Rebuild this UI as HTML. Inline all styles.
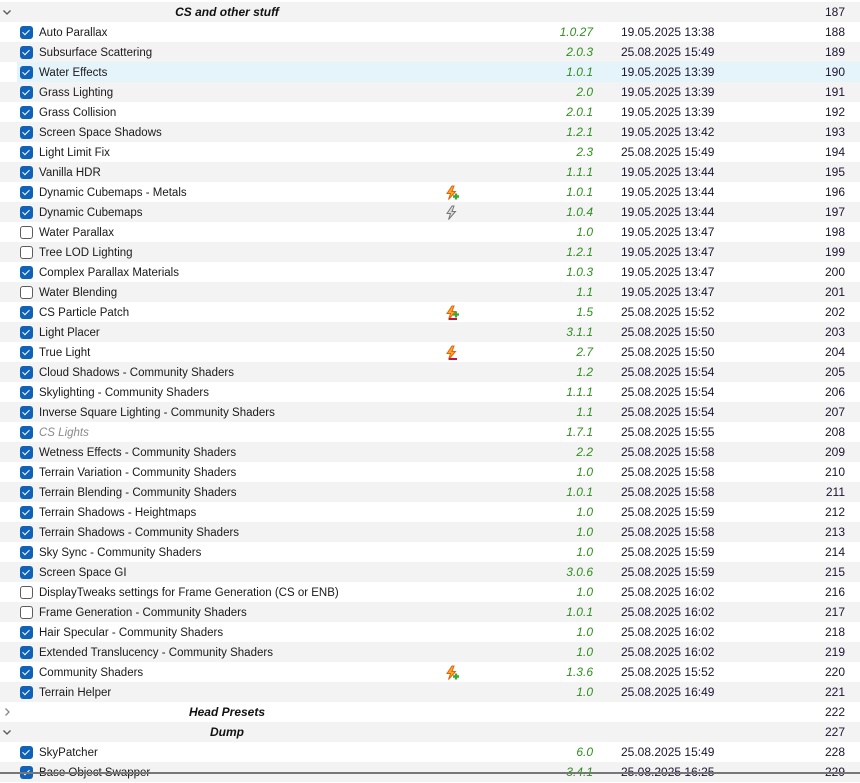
<!DOCTYPE html>
<html><head><meta charset="utf-8"><style>
*{margin:0;padding:0;box-sizing:border-box}
html,body{width:860px;height:775px;overflow:hidden;background:#fff;font-family:"Liberation Sans",sans-serif;font-size:11.5px;color:#1a1a1a}
#w{position:absolute;left:0;top:2px;width:860px}
.r{position:relative;height:20px;line-height:20px;background:#fff;white-space:nowrap}
.g{background:#f3f3f3}
.h{background:linear-gradient(to right,#fff 0,#fff 17px,#e5f3fb 17px)}
.c{position:absolute;left:20px;top:4px;width:13px;height:13px;border-radius:3px;background:#0f62b8}
.c::after{content:"";position:absolute;left:4px;top:2px;width:3px;height:6px;border:solid #fff;border-width:0 1.5px 1.5px 0;transform:rotate(45deg)}
.u{position:absolute;left:20px;top:4px;width:13px;height:13px;border-radius:3px;background:#fff;border:1px solid #5c5c5c}
.n{position:absolute;left:39px;top:1px}
.gi{color:#8a8a8a;font-style:italic}
.v{position:absolute;right:267px;color:#2f8f1f;font-style:italic;font-size:12px}
.d{position:absolute;left:621px;color:#1c1530;font-size:12px}
.p{position:absolute;right:15px;color:#1c1530;font-size:12px}
.s{position:absolute;left:0;width:454px;text-align:center;font-weight:bold;font-style:italic;color:#111;font-size:12px}
.ic{position:absolute;left:444px;top:3px}
.ar{position:absolute;left:2px;top:5px}
#bl{position:absolute;left:0;top:772px;width:860px;height:2px;background:#777}
</style></head><body>
<svg width="0" height="0" style="position:absolute"><defs>
<symbol id="bolt" viewBox="0 0 16 16"><path d="M8 1 L3 8.5 H6.5 L4.5 14.5 L11.5 6.5 H8 L10 1Z" fill="#f9a825" stroke="#e8600a" stroke-width="1"/></symbol>
<symbol id="gbolt" viewBox="0 0 16 16"><path d="M8 1 L3 8.5 H6.5 L4.5 14.5 L11.5 6.5 H8 L10 1Z" fill="#ddd" stroke="#777" stroke-width="1"/></symbol>
<symbol id="down" viewBox="0 0 10 10"><path d="M1.5 3.5 L5 7 L8.5 3.5" fill="none" stroke="#555" stroke-width="1.3"/></symbol>
<symbol id="right" viewBox="0 0 10 10"><path d="M3.5 1.5 L7 5 L3.5 8.5" fill="none" stroke="#888" stroke-width="1.3"/></symbol>
</defs></svg>
<div id="w">
<div class="r g"><svg class="ar" width="10" height="10"><use href="#down"/></svg><span class="s">CS and other stuff</span><span class="p">187</span></div>
<div class="r"><i class="c"></i><span class="n">Auto Parallax</span><span class="v">1.0.27</span><span class="d">19.05.2025 13:38</span><span class="p">188</span></div>
<div class="r g"><i class="c"></i><span class="n">Subsurface Scattering</span><span class="v">2.0.3</span><span class="d">25.08.2025 15:49</span><span class="p">189</span></div>
<div class="r h"><i class="c"></i><span class="n">Water Effects</span><span class="v">1.0.1</span><span class="d">19.05.2025 13:39</span><span class="p">190</span></div>
<div class="r g"><i class="c"></i><span class="n">Grass Lighting</span><span class="v">2.0</span><span class="d">19.05.2025 13:39</span><span class="p">191</span></div>
<div class="r"><i class="c"></i><span class="n">Grass Collision</span><span class="v">2.0.1</span><span class="d">19.05.2025 13:39</span><span class="p">192</span></div>
<div class="r g"><i class="c"></i><span class="n">Screen Space Shadows</span><span class="v">1.2.1</span><span class="d">19.05.2025 13:42</span><span class="p">193</span></div>
<div class="r"><i class="c"></i><span class="n">Light Limit Fix</span><span class="v">2.3</span><span class="d">25.08.2025 15:49</span><span class="p">194</span></div>
<div class="r g"><i class="c"></i><span class="n">Vanilla HDR</span><span class="v">1.1.1</span><span class="d">19.05.2025 13:44</span><span class="p">195</span></div>
<div class="r"><i class="c"></i><span class="n">Dynamic Cubemaps - Metals</span><svg class="ic" width="16" height="16"><use href="#bolt"/><path d="M9 11.5h6M12 8.5v6" stroke="#3aaa35" stroke-width="2.4"/></svg><span class="v">1.0.1</span><span class="d">19.05.2025 13:44</span><span class="p">196</span></div>
<div class="r g"><i class="c"></i><span class="n">Dynamic Cubemaps</span><svg class="ic" width="16" height="16"><use href="#gbolt"/></svg><span class="v">1.0.4</span><span class="d">19.05.2025 13:44</span><span class="p">197</span></div>
<div class="r"><i class="u"></i><span class="n">Water Parallax</span><span class="v">1.0</span><span class="d">19.05.2025 13:47</span><span class="p">198</span></div>
<div class="r g"><i class="u"></i><span class="n">Tree LOD Lighting</span><span class="v">1.2.1</span><span class="d">19.05.2025 13:47</span><span class="p">199</span></div>
<div class="r"><i class="c"></i><span class="n">Complex Parallax Materials</span><span class="v">1.0.3</span><span class="d">19.05.2025 13:47</span><span class="p">200</span></div>
<div class="r g"><i class="u"></i><span class="n">Water Blending</span><span class="v">1.1</span><span class="d">19.05.2025 13:47</span><span class="p">201</span></div>
<div class="r"><i class="c"></i><span class="n">CS Particle Patch</span><svg class="ic" width="16" height="16"><use href="#bolt"/><path d="M9 9.5h6M12 6.5v6" stroke="#3aaa35" stroke-width="2.2"/><path d="M5 14h8" stroke="#c0143c" stroke-width="2"/></svg><span class="v">1.5</span><span class="d">25.08.2025 15:52</span><span class="p">202</span></div>
<div class="r g"><i class="c"></i><span class="n">Light Placer</span><span class="v">3.1.1</span><span class="d">25.08.2025 15:50</span><span class="p">203</span></div>
<div class="r"><i class="c"></i><span class="n">True Light</span><svg class="ic" width="16" height="16"><use href="#bolt"/><path d="M5 14h8" stroke="#c0143c" stroke-width="2"/></svg><span class="v">2.7</span><span class="d">25.08.2025 15:50</span><span class="p">204</span></div>
<div class="r g"><i class="c"></i><span class="n">Cloud Shadows - Community Shaders</span><span class="v">1.2</span><span class="d">25.08.2025 15:54</span><span class="p">205</span></div>
<div class="r"><i class="c"></i><span class="n">Skylighting - Community Shaders</span><span class="v">1.1.1</span><span class="d">25.08.2025 15:54</span><span class="p">206</span></div>
<div class="r g"><i class="c"></i><span class="n">Inverse Square Lighting - Community Shaders</span><span class="v">1.1</span><span class="d">25.08.2025 15:54</span><span class="p">207</span></div>
<div class="r"><i class="c"></i><span class="n gi">CS Lights</span><span class="v">1.7.1</span><span class="d">25.08.2025 15:55</span><span class="p">208</span></div>
<div class="r g"><i class="c"></i><span class="n">Wetness Effects - Community Shaders</span><span class="v">2.2</span><span class="d">25.08.2025 15:58</span><span class="p">209</span></div>
<div class="r"><i class="c"></i><span class="n">Terrain Variation - Community Shaders</span><span class="v">1.0</span><span class="d">25.08.2025 15:58</span><span class="p">210</span></div>
<div class="r g"><i class="c"></i><span class="n">Terrain Blending - Community Shaders</span><span class="v">1.0.1</span><span class="d">25.08.2025 15:58</span><span class="p">211</span></div>
<div class="r"><i class="c"></i><span class="n">Terrain Shadows - Heightmaps</span><span class="v">1.0</span><span class="d">25.08.2025 15:59</span><span class="p">212</span></div>
<div class="r g"><i class="c"></i><span class="n">Terrain Shadows - Community Shaders</span><span class="v">1.0</span><span class="d">25.08.2025 15:58</span><span class="p">213</span></div>
<div class="r"><i class="c"></i><span class="n">Sky Sync - Community Shaders</span><span class="v">1.0</span><span class="d">25.08.2025 15:59</span><span class="p">214</span></div>
<div class="r g"><i class="c"></i><span class="n">Screen Space GI</span><span class="v">3.0.6</span><span class="d">25.08.2025 15:59</span><span class="p">215</span></div>
<div class="r"><i class="u"></i><span class="n">DisplayTweaks settings for Frame Generation (CS or ENB)</span><span class="v">1.0</span><span class="d">25.08.2025 16:02</span><span class="p">216</span></div>
<div class="r g"><i class="u"></i><span class="n">Frame Generation - Community Shaders</span><span class="v">1.0.1</span><span class="d">25.08.2025 16:02</span><span class="p">217</span></div>
<div class="r"><i class="c"></i><span class="n">Hair Specular - Community Shaders</span><span class="v">1.0</span><span class="d">25.08.2025 16:02</span><span class="p">218</span></div>
<div class="r g"><i class="c"></i><span class="n">Extended Translucency - Community Shaders</span><span class="v">1.0</span><span class="d">25.08.2025 16:02</span><span class="p">219</span></div>
<div class="r"><i class="c"></i><span class="n">Community Shaders</span><svg class="ic" width="16" height="16"><use href="#bolt"/><path d="M9 11.5h6M12 8.5v6" stroke="#3aaa35" stroke-width="2.4"/></svg><span class="v">1.3.6</span><span class="d">25.08.2025 15:52</span><span class="p">220</span></div>
<div class="r g"><i class="c"></i><span class="n">Terrain Helper</span><span class="v">1.0</span><span class="d">25.08.2025 16:49</span><span class="p">221</span></div>
<div class="r"><svg class="ar" width="10" height="10"><use href="#right"/></svg><span class="s">Head Presets</span><span class="p">222</span></div>
<div class="r g"><svg class="ar" width="10" height="10"><use href="#down"/></svg><span class="s">Dump</span><span class="p">227</span></div>
<div class="r"><i class="c"></i><span class="n">SkyPatcher</span><span class="v">6.0</span><span class="d">25.08.2025 15:49</span><span class="p">228</span></div>
<div class="r g"><i class="c"></i><span class="n">Base Object Swapper</span><span class="v">3.4.1</span><span class="d">25.08.2025 16:25</span><span class="p">229</span></div>
</div>
<div id="bl"></div>
</body></html>
